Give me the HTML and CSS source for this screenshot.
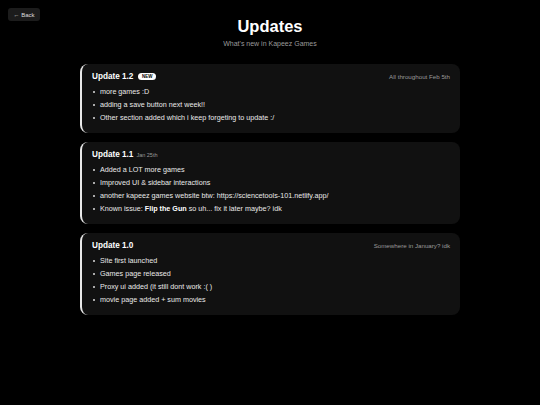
FILE: index.html
```html
<!DOCTYPE html>
<html>
<head>
<meta charset="utf-8">
<link rel="stylesheet" href="styles.css">
</head>
<body>
<div class="topbar"><a class="back">← Back</a></div>
<header class="head">
  <h1 class="title">Updates</h1>
  <p class="sub">What's new in Kapeez Games</p>
</header>
<main class="list">
  <section class="card">
    <div class="card-head">
      <div class="ver">Update 1.2 <span class="badge">NEW</span></div>
      <div class="date">All throughout Feb 5th</div>
    </div>
    <ul class="items">
      <li>more games :D</li>
      <li>adding a save button next week!!</li>
      <li>Other section added which i keep forgeting to update :/</li>
    </ul>
  </section>
  <section class="card">
    <div class="card-head">
      <div class="ver">Update 1.1 <span class="small-date">Jan 25th</span></div>
    </div>
    <ul class="items">
      <li>Added a LOT more games</li>
      <li>Improved UI &amp; sidebar interactions</li>
      <li>another kapeez games website btw: https://sciencetools-101.netlify.app/</li>
      <li>Known issue: <b>Flip the Gun</b> so uh... fix it later maybe? idk</li>
    </ul>
  </section>
  <section class="card">
    <div class="card-head">
      <div class="ver">Update 1.0</div>
      <div class="date">Somewhere in January? idk</div>
    </div>
    <ul class="items">
      <li>Site first launched</li>
      <li>Games page released</li>
      <li>Proxy ui added (it still dont work :( )</li>
      <li>movie page added + sum movies</li>
    </ul>
  </section>
</main>
</body>
</html>
```
FILE: styles.css
```css
html, body { margin: 0; padding: 0; background: #000; }
body {
  font-family: "Liberation Sans", Arial, sans-serif;
  color: #fff;
  width: 540px;
  min-height: 405px;
}
.topbar { padding: 8px 0 0 8px; height: 13px; display: flex; }
.back {
  display: flex;
  align-items: center;
  height: 13px;
  width: 32px;
  box-sizing: border-box;
  justify-content: center;
  background: #1c1c1c;
  border-radius: 3px;
  font-size: 6px;
  color: #ddd;
}
.head { text-align: center; margin-top: -5px; }
.title {
  margin: 0;
  font-size: 16.5px;
  font-weight: 700;
  line-height: 20px;
}
.sub {
  margin: 2.5px 0 0;
  font-size: 7px;
  line-height: 9px;
  color: #9a9a9a;
}
.list {
  width: 380px;
  margin: 16.5px auto 0;
  display: flex;
  flex-direction: column;
  gap: 9.5px;
}
.card {
  background: #111;
  border-left: 2px solid #e8e8e8;
  border-radius: 8px;
  padding: 6.5px 10px 10.5px 10px;
}
.card-head {
  display: flex;
  justify-content: space-between;
  align-items: center;
  height: 12px;
}
.ver {
  font-size: 8.2px;
  font-weight: 700;
  display: flex;
  align-items: center;
  gap: 5px;
}
.badge {
  background: #fff;
  color: #000;
  font-size: 4.5px;
  font-weight: 700;
  border-radius: 4px;
  padding: 1px 3.5px;
  line-height: 5px;
}
.small-date { font-size: 5.5px; font-weight: 400; color: #9a9a9a; margin-left: -2px; }
.date { font-size: 6.2px; color: #9a9a9a; }
.items {
  margin: 4.5px 0 0;
  padding: 0;
  list-style: none;
}
.items li {
  position: relative;
  font-size: 7.2px;
  line-height: 9px;
  margin-top: 4px;
  padding-left: 8px;
  color: #eaeaea;
}
.items li::before {
  content: "";
  position: absolute;
  left: 1px;
  top: 3.5px;
  width: 2px;
  height: 2px;
  border-radius: 50%;
  background: #ddd;
}
.items li:first-child { margin-top: 0; }
.items b { color: #fff; }
```
